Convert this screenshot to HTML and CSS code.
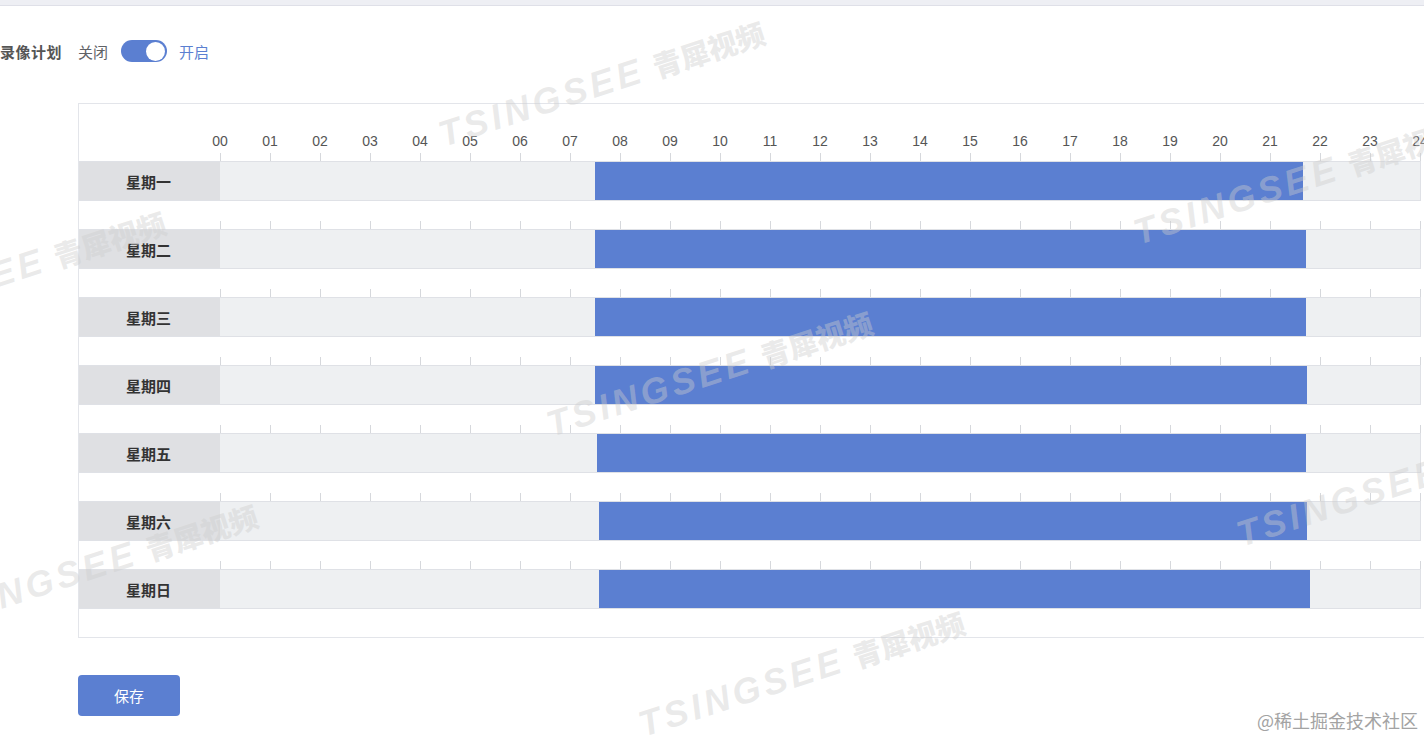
FILE: index.html
```html
<!DOCTYPE html>
<html lang="zh">
<head>
<meta charset="utf-8">
<title>录像计划</title>
<link rel="stylesheet" href="styles.css">
</head>
<body>
<div class="topbar"></div>
<div class="page">
  <div class="plan">
    <span class="plan-label">录像计划</span>
    <span class="off">关闭</span>
    <span class="switch"><span class="knob"></span></span>
    <span class="on">开启</span>
  </div>

  <div class="schedule">
    <div class="hours">
      <span>00</span><span>01</span><span>02</span><span>03</span><span>04</span><span>05</span><span>06</span><span>07</span><span>08</span><span>09</span><span>10</span><span>11</span><span>12</span><span>13</span><span>14</span><span>15</span><span>16</span><span>17</span><span>18</span><span>19</span><span>20</span><span>21</span><span>22</span><span>23</span><span>24</span>
    </div>

    <div class="day">
      <div class="ticks"></div>
      <div class="row"><div class="day-name">星期一</div><div class="track"><div class="bar" style="margin-left:375px;width:708px"></div></div></div>
    </div>
    <div class="day">
      <div class="ticks"></div>
      <div class="row"><div class="day-name">星期二</div><div class="track"><div class="bar" style="margin-left:375px;width:711px"></div></div></div>
    </div>
    <div class="day">
      <div class="ticks"></div>
      <div class="row"><div class="day-name">星期三</div><div class="track"><div class="bar" style="margin-left:375px;width:711px"></div></div></div>
    </div>
    <div class="day">
      <div class="ticks"></div>
      <div class="row"><div class="day-name">星期四</div><div class="track"><div class="bar" style="margin-left:375px;width:712px"></div></div></div>
    </div>
    <div class="day">
      <div class="ticks"></div>
      <div class="row"><div class="day-name">星期五</div><div class="track"><div class="bar" style="margin-left:377px;width:709px"></div></div></div>
    </div>
    <div class="day">
      <div class="ticks"></div>
      <div class="row"><div class="day-name">星期六</div><div class="track"><div class="bar" style="margin-left:379px;width:708px"></div></div></div>
    </div>
    <div class="day">
      <div class="ticks"></div>
      <div class="row"><div class="day-name">星期日</div><div class="track"><div class="bar" style="margin-left:379px;width:711px"></div></div></div>
    </div>
  </div>

  <button class="save" type="button">保存</button>
</div>

<div class="wm wm1"><span class="wm-latin">TSINGSEE</span><span class="wm-cjk">青犀视频</span></div>
<div class="wm wm2"><span class="wm-latin">TSINGSEE</span><span class="wm-cjk">青犀视频</span></div>
<div class="wm wm3"><span class="wm-latin">TSINGSEE</span><span class="wm-cjk">青犀视频</span></div>
<div class="wm wm4"><span class="wm-latin">TSINGSEE</span><span class="wm-cjk">青犀视频</span></div>
<div class="wm wm5"><span class="wm-latin">TSINGSEE</span><span class="wm-cjk">青犀视频</span></div>
<div class="wm wm6"><span class="wm-latin">TSINGSEE</span><span class="wm-cjk">青犀视频</span></div>
<div class="wm wm7"><span class="wm-latin">TSINGSEE</span><span class="wm-cjk">青犀视频</span></div>

<div class="credit">@稀土掘金技术社区</div>
</body>
</html>
```

FILE: styles.css
```css
html, body {
  margin: 0;
  padding: 0;
  overflow: hidden;
  background: #ffffff;
}

body {
  position: relative;
  width: 1424px;
  height: 739px;
  font-family: "Noto Sans", "Noto Sans CJK SC", sans-serif;
  color: #333333;
}

.topbar {
  height: 5px;
  background: #eeeff4;
  border-bottom: 1px solid #dfe0e8;
}

.page {
  display: flex;
  flex-direction: column;
  align-items: flex-start;
}

.plan {
  margin-top: 34px;
  height: 22px;
  display: flex;
  align-items: center;
  font-family: "Noto Sans CJK SC", sans-serif;
  font-size: 15px;
}

.plan-label {
  font-weight: 700;
  color: #555555;
  letter-spacing: 0.5px;
}

.off {
  margin-left: 16px;
  color: #606266;
}

.switch {
  margin-left: 13px;
  width: 46px;
  height: 22px;
  border-radius: 11px;
  background: #5b7fd1;
  display: flex;
  align-items: center;
  justify-content: flex-end;
  padding-right: 2px;
  box-sizing: border-box;
}

.knob {
  width: 19px;
  height: 19px;
  border-radius: 50%;
  background: #ffffff;
}

.on {
  margin-left: 12px;
  color: #5b7fd1;
}

.schedule {
  margin-top: 41px;
  margin-left: 78px;
  width: 1380px;
  border: 1px solid #e3e5ea;
  padding-bottom: 8px;
  flex-shrink: 0;
}

.hours {
  display: flex;
  margin-left: 116px;
  padding-top: 27px;
  padding-bottom: 2px;
  font-family: "Liberation Sans", "Noto Sans", sans-serif;
  font-size: 14px;
  line-height: 20px;
  color: #555555;
}

.hours span {
  width: 50px;
  flex-shrink: 0;
  text-align: center;
}

.day {
  margin-bottom: 20px;
}

.ticks {
  margin-left: 141px;
  width: 1201px;
  height: 8px;
  background: repeating-linear-gradient(to right, #d6d8dc 0, #d6d8dc 1px, transparent 1px, transparent 50px);
}

.row {
  display: flex;
  width: 1342px;
  height: 40px;
  box-sizing: border-box;
  border-top: 1px solid #dfe1e6;
  border-bottom: 1px solid #dfe1e6;
  border-right: 1px solid #dfe1e6;
}

.day-name {
  width: 141px;
  flex-shrink: 0;
  background: #dfe0e3;
  display: flex;
  align-items: center;
  justify-content: center;
  font-family: "Noto Sans CJK SC", sans-serif;
  font-size: 15px;
  font-weight: 700;
  color: #333333;
  padding-right: 2px;
  box-sizing: border-box;
}

.track {
  flex: 1;
  display: flex;
  background: #eef0f2;
}

.bar {
  height: 100%;
  background: #5b7fd1;
}

.save {
  margin-top: 37px;
  margin-left: 78px;
  width: 102px;
  height: 41px;
  border: none;
  border-radius: 4px;
  background: #5b7fd1;
  color: #ffffff;
  font-family: "Noto Sans CJK SC", sans-serif;
  font-size: 15px;
  padding: 0;
}

.wm {
  position: absolute;
  width: 360px;
  height: 44px;
  display: flex;
  align-items: center;
  white-space: nowrap;
  transform: rotate(-18deg);
  transform-origin: 50% 50%;
  pointer-events: none;
  color: rgba(205, 205, 205, 0.42);
}

.wm-latin {
  font-family: "Liberation Sans", sans-serif;
  font-weight: 700;
  font-style: italic;
  font-size: 36px;
  letter-spacing: 4px;
}

.wm-cjk {
  margin-left: 10px;
  font-family: "Noto Sans CJK SC", sans-serif;
  font-weight: 900;
  font-size: 29px;
}

.wm1 { left: 431px; top: 58px; }
.wm2 { left: -168px; top: 248px; }
.wm3 { left: 1126px; top: 156px; }
.wm4 { left: 539px; top: 348px; }
.wm5 { left: 1229px; top: 458px; }
.wm6 { left: -76px; top: 541px; }
.wm7 { left: 631px; top: 648px; }

.credit {
  position: absolute;
  right: 6px;
  bottom: 6px;
  font-family: "Noto Sans CJK SC", sans-serif;
  font-size: 18px;
  color: #a3a3a3;
}
```
